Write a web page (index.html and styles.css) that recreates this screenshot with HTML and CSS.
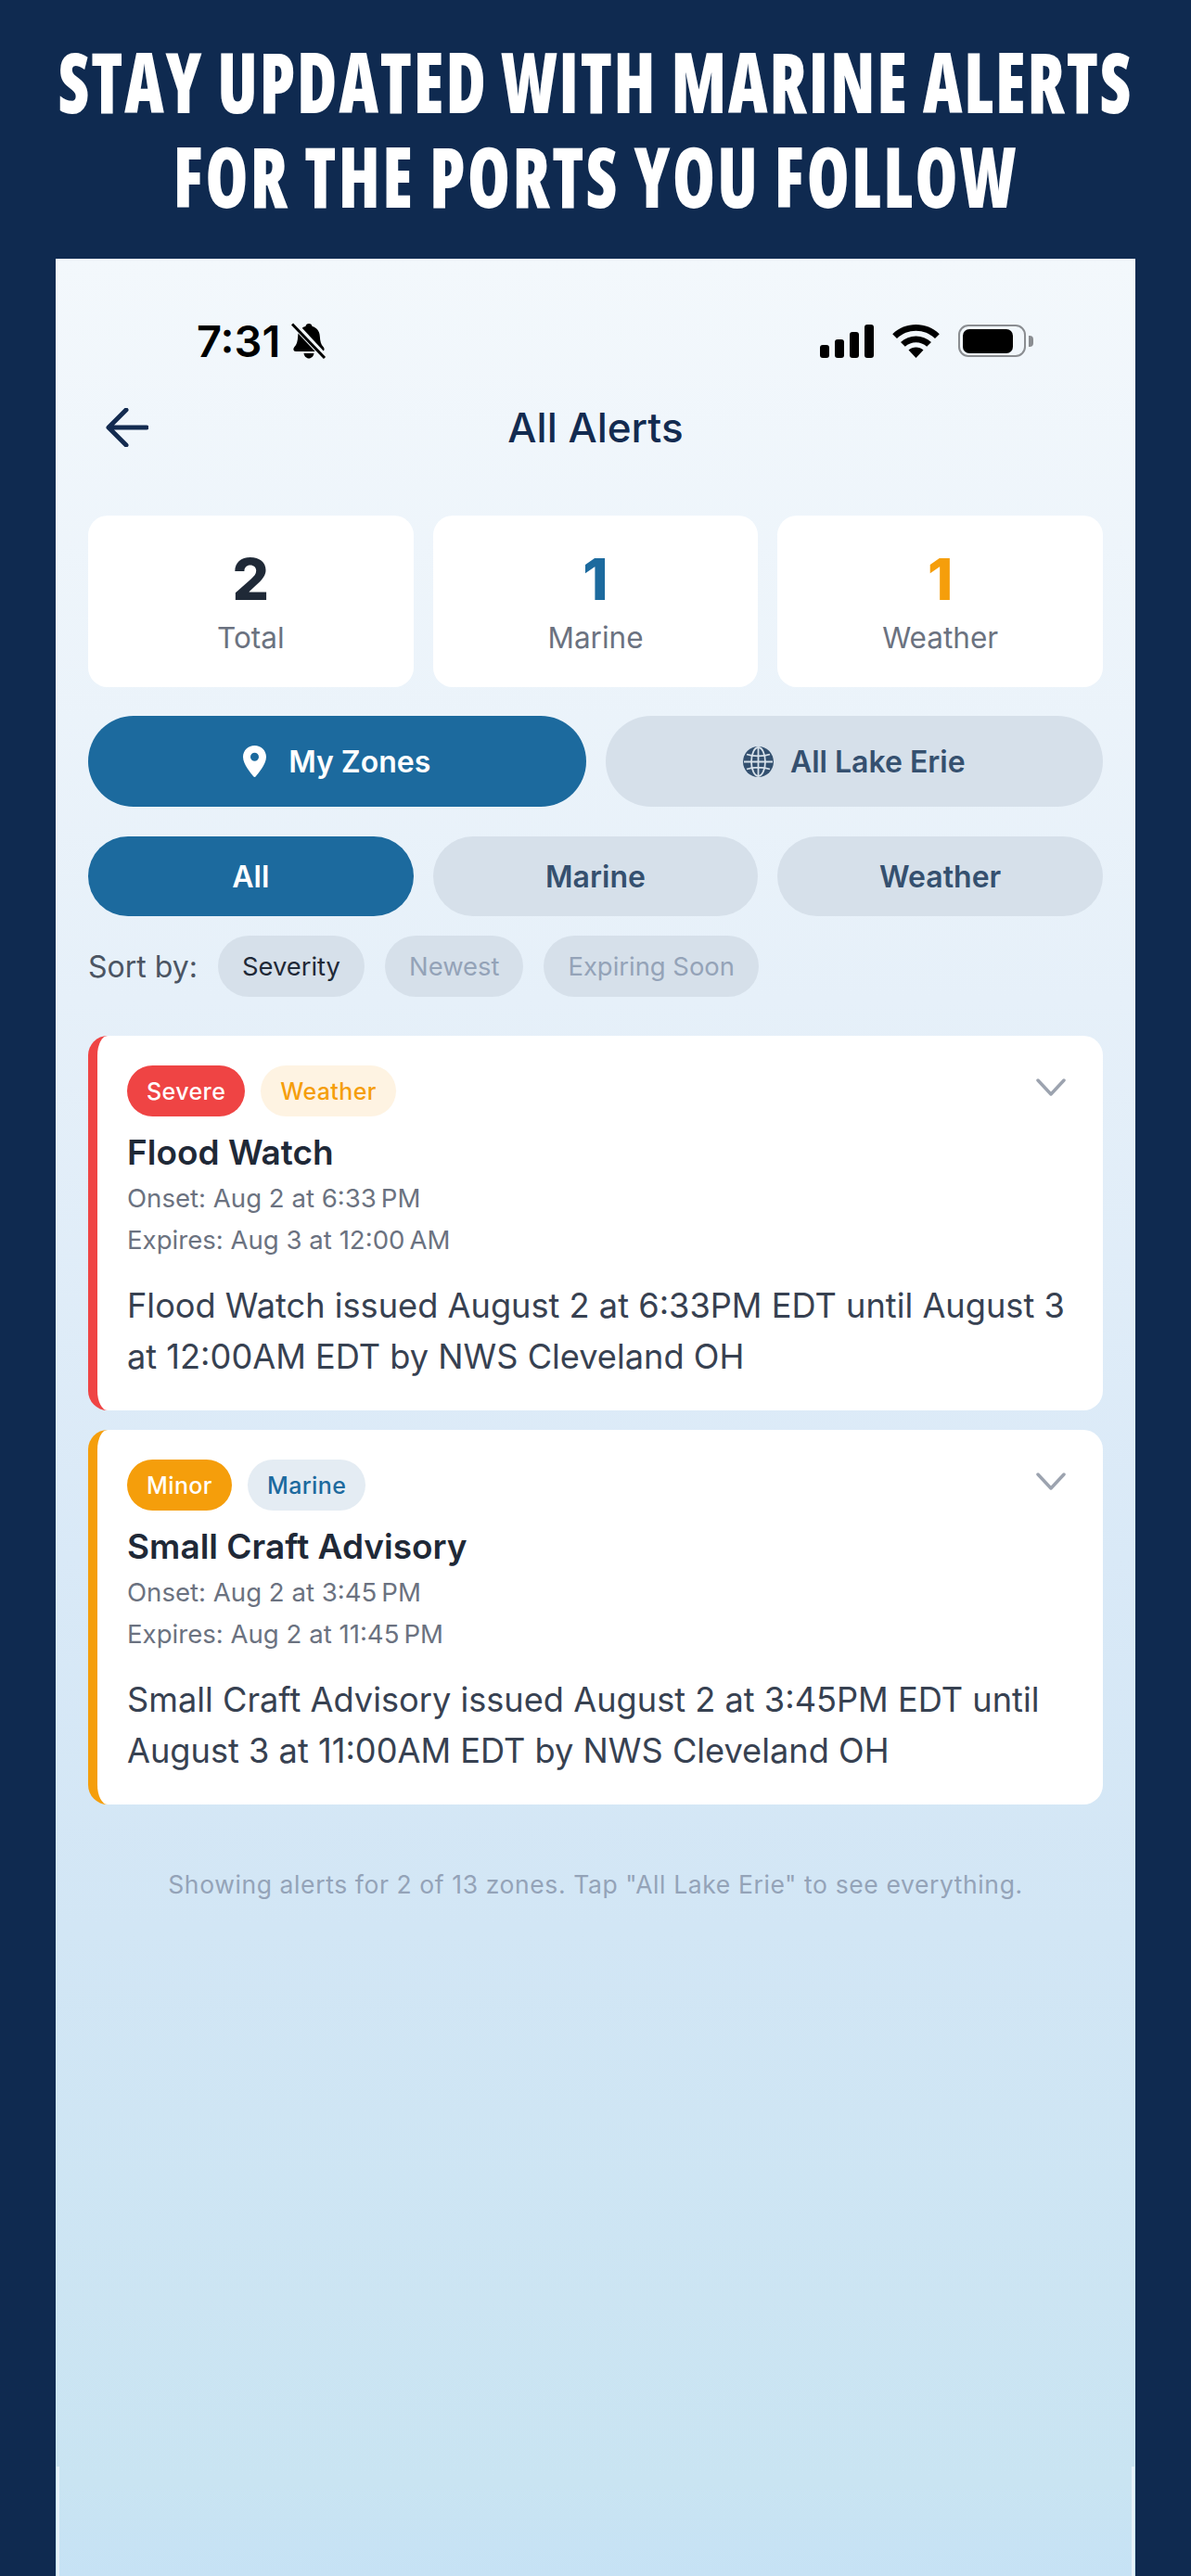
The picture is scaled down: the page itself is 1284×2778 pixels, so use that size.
FILE: index.html
```html
<!DOCTYPE html>
<html lang="en">
<head>
<meta charset="utf-8">
<title>All Alerts</title>
<link rel="stylesheet" href="styles.css">
</head>
<body>
<header class="promo">
  <h1 class="promo-title"><span class="promo-line promo-line-long">STAY UPDATED WITH MARINE ALERTS</span><span class="promo-line">FOR THE PORTS YOU FOLLOW</span></h1>
</header>
<main class="phone">
  <div class="status">
    <div class="status-left">
      <span class="clock">7:31</span>
      <svg class="bell" viewBox="0 0 38 39"><path d="M19 1c2 0 3.200 1.300 3.600 3 5 1.200 7.900 5.200 8.200 10.500.3 5.500 1.300 9 3.700 11.500 1.600 1.700 1.700 5-1.500 5H5c-3.200 0-3.100-3.300-1.500-5 2.400-2.500 3.400-6 3.700-11.500C7.500 9.200 10.400 5.200 15.400 4c.4-1.700 1.600-3 3.600-3zM13.500 33h11c-.5 3.200-2.800 5.500-5.500 5.500s-5-2.300-5.500-5.500z" fill="#000"/><path d="M3 1.500 37 38" stroke="#f3f8fc" stroke-width="7"/><path d="M1 1.500 36 38" stroke="#000" stroke-width="3" fill="none"/></svg>
    </div>
    <div class="status-right">
      <div class="signal"><i class="bar bar-1"></i><i class="bar bar-2"></i><i class="bar bar-3"></i><i class="bar bar-4"></i></div>
      <svg class="wifi" viewBox="0 0 51 36"><path d="M25.500 0C35 0 43.800 3.600 50.800 10.200L46 15C40.300 9.700 33.200 6.800 25.500 6.800S10.700 9.700 5 15L.2 10.200C7.200 3.600 16 0 25.500 0z"/><path d="M25.500 12.500c6.200 0 11.900 2.300 16.500 6.500l-4.800 4.800c-3.300-2.900-7.300-4.500-11.700-4.500s-8.400 1.600-11.700 4.500L9 19c4.600-4.200 10.300-6.500 16.500-6.500z"/><path d="M25.500 24.500c3 0 5.800 1 8 3L25.500 36l-8-8.500c2.200-2 5-3 8-3z"/></svg>
      <div class="battery"><div class="battery-body"><div class="battery-fill"></div></div><div class="battery-nub"></div></div>
    </div>
  </div>
  <nav class="topbar">
    <svg class="back" viewBox="0 0 46 42"><path d="M44 21H4M22 2 3 21l19 19" fill="none" stroke="#132b50" stroke-width="5" stroke-linecap="round" stroke-linejoin="round"/></svg>
    <h2 class="topbar-title">All Alerts</h2>
  </nav>
  <section class="stats">
    <div class="stat"><div class="stat-num num-dark">2</div><div class="stat-label">Total</div></div>
    <div class="stat"><div class="stat-num num-blue">1</div><div class="stat-label">Marine</div></div>
    <div class="stat"><div class="stat-num num-orange">1</div><div class="stat-label">Weather</div></div>
  </section>
  <section class="zones">
    <div class="zone zone-on">
      <svg class="zone-icon pin" viewBox="0 0 25 34"><path fill-rule="evenodd" d="M12.500 0C19.400 0 25 5.400 25 12.200 25 20.500 15.500 31 13.800 33.300c-.7.900-1.900.9-2.600 0C9.500 31 0 20.500 0 12.200 0 5.400 5.600 0 12.500 0zm0 7.800a4.500 4.500 0 1 0 0 9 4.500 4.500 0 0 0 0-9z" fill="#fff"/></svg>
      <span>My Zones</span>
    </div>
    <div class="zone zone-off">
      <svg class="zone-icon globe" viewBox="0 0 33 33"><circle cx="16.500" cy="16.500" r="16.500" fill="#33506f"/><g fill="none" stroke="#d7e1ea" stroke-width="1.800"><ellipse cx="16.500" cy="16.500" rx="7.500" ry="15.500"/><path d="M16.500 1v31M1 16.500h31M4 8.500c7 2.500 18 2.500 25 0M4 24.500c7-2.500 18-2.500 25 0"/></g></svg>
      <span>All Lake Erie</span>
    </div>
  </section>
  <section class="filters">
    <div class="filter filter-on">All</div>
    <div class="filter">Marine</div>
    <div class="filter">Weather</div>
  </section>
  <section class="sort">
    <span class="sort-label">Sort by:</span>
    <span class="sort-pill sort-on">Severity</span>
    <span class="sort-pill">Newest</span>
    <span class="sort-pill">Expiring Soon</span>
  </section>
  <section class="alerts">
    <article class="alert alert-red">
      <div class="alert-head">
        <div class="badges"><span class="badge badge-red">Severe</span><span class="badge badge-weather">Weather</span></div>
        <svg class="chevron" viewBox="0 0 32 19"><path d="M2 2l14 15L30 2" fill="none" stroke="#9ca3af" stroke-width="3.500" stroke-linecap="round" stroke-linejoin="round"/></svg>
      </div>
      <h3 class="alert-title">Flood Watch</h3>
      <p class="alert-time">Onset: Aug 2 at 6:33&#8239;PM</p>
      <p class="alert-time">Expires: Aug 3 at 12:00&#8239;AM</p>
      <p class="alert-desc">Flood Watch issued August 2 at 6:33PM EDT until August 3 at 12:00AM EDT by NWS Cleveland OH</p>
    </article>
    <article class="alert alert-orange">
      <div class="alert-head">
        <div class="badges"><span class="badge badge-orange">Minor</span><span class="badge badge-marine">Marine</span></div>
        <svg class="chevron" viewBox="0 0 32 19"><path d="M2 2l14 15L30 2" fill="none" stroke="#9ca3af" stroke-width="3.500" stroke-linecap="round" stroke-linejoin="round"/></svg>
      </div>
      <h3 class="alert-title">Small Craft Advisory</h3>
      <p class="alert-time">Onset: Aug 2 at 3:45&#8239;PM</p>
      <p class="alert-time">Expires: Aug 2 at 11:45&#8239;PM</p>
      <p class="alert-desc">Small Craft Advisory issued August 2 at 3:45PM EDT until August 3 at 11:00AM EDT by NWS Cleveland OH</p>
    </article>
  </section>
  <p class="foot">Showing alerts for 2 of 13 zones. Tap "All Lake Erie" to see everything.</p>
</main>
</body>
</html>
```
FILE: styles.css
```css
* { box-sizing: border-box; }
html, body { margin: 0; padding: 0; }
body {
  width: 1284px;
  height: 2778px;
  overflow: hidden;
  background: #0f2a50;
  display: flex;
  flex-direction: column;
  font-family: "Inter", "Liberation Sans", sans-serif;
}
.promo { height: 279px; padding-top: 45px; flex: none; }
.promo-title {
  margin: 0;
  display: flex;
  flex-direction: column;
  gap: 19px;
  color: #fff;
  text-align: center;
  font-family: "Open Sans", "Liberation Sans", sans-serif;
  font-stretch: 75%;
  font-weight: 800;
  font-size: 74px;
  line-height: 83px;
  letter-spacing: 2.500px;
}
.promo-line { display: block; transform: scaleY(1.23); white-space: nowrap; }
.promo-line-long { letter-spacing: 1.900px; }

.phone {
  position: relative;
  flex: 1;
  margin: 0 60px;
  padding: 69px 35px 0;
  background: linear-gradient(180deg, #f3f8fc 0%, #e6f0f9 32%, #d9e9f7 56%, #d2e6f5 72%, #c9e4f2 96%, #c6e2f5 100%);
}
.phone::before, .phone::after {
  content: "";
  position: absolute;
  bottom: 0;
  width: 3px;
  height: 118px;
  background: #e6f2fa;
}
.phone::before { left: 1px; }
.phone::after { right: 1px; }
.status {
  height: 39px;
  padding: 0 75px 0 117px;
  display: flex;
  justify-content: space-between;
  align-items: center;
}
.status-left { display: flex; align-items: center; gap: 12px; }
.clock { font-size: 47px; font-weight: 600; line-height: 39px; color: #000; }
.bell { width: 38px; height: 39px; display: block; }
.status-right { display: flex; align-items: center; gap: 20px; }
.signal { display: flex; align-items: flex-end; gap: 6px; height: 36px; }
.bar { display: block; width: 10px; background: #000; border-radius: 3px; }
.bar-1 { height: 14px; }
.bar-2 { height: 20px; }
.bar-3 { height: 28px; }
.bar-4 { height: 36px; }
.wifi { width: 51px; height: 36px; display: block; fill: #000; }
.battery { display: flex; align-items: center; gap: 3px; }
.battery-body {
  width: 73px;
  height: 35px;
  border: 2.500px solid #8a8d91;
  border-radius: 11px;
  padding: 2.500px 12px 2.500px 3px;
}
.battery-fill { width: 100%; height: 100%; background: #000; border-radius: 7px; }
.battery-nub { width: 5px; height: 12px; background: #8a8d91; border-radius: 0 4px 4px 0; }

.topbar {
  height: 62px;
  margin: 43px 0 64px;
  display: grid;
  grid-template-columns: 1fr auto 1fr;
  align-items: center;
}
.back { width: 46px; height: 42px; display: block; margin-left: 19px; }
.topbar-title { margin: 0; font-size: 44px; font-weight: 500; color: #132b50; }

.stats, .filters { display: grid; grid-template-columns: repeat(3, 1fr); gap: 21px; }
.stat {
  height: 185px;
  background: #fff;
  border-radius: 21px;
  padding-top: 34px;
  text-align: center;
}
.stat-num { font-size: 62px; font-weight: 800; line-height: 70px; }
.num-dark { color: #1f2937; }
.num-blue { color: #1c6a9e; }
.num-orange { color: #f59e0b; }
.stat-label { font-size: 31.500px; line-height: 40px; margin-top: 8px; color: #6b7280; }

.zones { display: grid; grid-template-columns: 1fr 1fr; gap: 21px; margin-top: 31px; }
.zone {
  height: 98px;
  border-radius: 49px;
  display: flex;
  align-items: center;
  justify-content: center;
  font-size: 32px;
  font-weight: 600;
}
.zone-on { background: #1c6a9e; color: #fff; gap: 24px; }
.zone-off { background: #d6e0ea; color: #35506f; gap: 18px; }
.zone-icon { display: block; }
.pin { width: 25px; height: 34px; }
.globe { width: 33px; height: 33px; }

.filters { margin-top: 32px; }
.filter {
  height: 86px;
  border-radius: 43px;
  background: #d6e0ea;
  color: #35506f;
  font-size: 32px;
  font-weight: 600;
  display: flex;
  align-items: center;
  justify-content: center;
}
.filter-on { background: #1c6a9e; color: #fff; }

.sort { display: flex; align-items: center; margin-top: 21px; gap: 22px; }
.sort-label { font-size: 32px; color: #4b5563; }
.sort-pill {
  height: 66px;
  padding: 0 26px;
  border-radius: 33px;
  background: #d6e0ea;
  color: #94a3b8;
  font-size: 27.400px;
  display: flex;
  align-items: center;
}
.sort-on { color: #1f2937; }

.alerts { display: flex; flex-direction: column; gap: 21px; margin-top: 42px; }
.alert {
  background: #fff;
  border-radius: 21px;
  border-left: 10px solid;
  padding: 32px 40px 30px 32px;
}
.alert-red { border-left-color: #ef4444; }
.alert-orange { border-left-color: #f59e0b; }
.alert-head { display: flex; justify-content: space-between; align-items: flex-start; }
.badges { display: flex; gap: 17px; }
.badge {
  height: 55px;
  padding: 0 21px;
  border-radius: 27.500px;
  font-size: 25px;
  font-weight: 500;
  letter-spacing: .4px;
  display: flex;
  align-items: center;
}
.badge-red { background: #ef4444; color: #fff; }
.badge-orange { background: #f59e0b; color: #fff; }
.badge-weather { background: #fef3e2; color: #f59e0b; }
.badge-marine { background: #e4ecf3; color: #1c6a9e; }
.chevron { width: 32px; height: 19px; margin-top: 14px; display: block; }
.alert-title { margin: 16px 0 5px; font-size: 37px; font-weight: 600; line-height: 45px; color: #1f2937; }
.alert-time { margin: 0; font-size: 27.600px; line-height: 45px; color: #6b7280; }
.alert-desc { margin: 21px 0 0; font-size: 36.200px; line-height: 55px; color: #374151; }
.foot {
  margin: 66px 0 0;
  text-align: center;
  font-size: 26.500px;
  line-height: 40px;
  letter-spacing: .6px;
  color: #94a3b8;
}
```
